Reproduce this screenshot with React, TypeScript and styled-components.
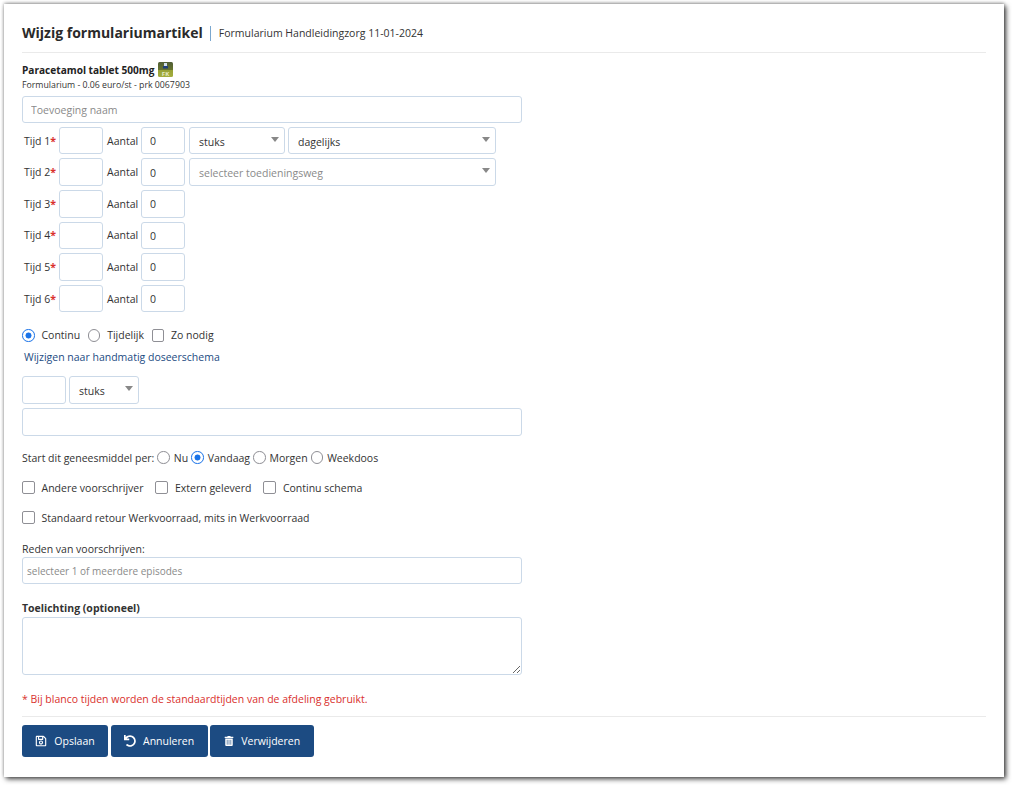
import React from "react";
import styled, { createGlobalStyle } from "styled-components";
import { FaRegSave, FaUndo, FaTrashAlt } from "react-icons/fa";

const Global = createGlobalStyle`
  html, body { margin: 0; padding: 0; background: #fff; }
  body { font-family: "Open Sans", "Liberation Sans", sans-serif; font-size: 10.5px; color: #333; }
`;

const Page = styled.div`
  box-sizing: border-box;
  width: 1012px;
  height: 785px;
  padding: 4px 8px 8px 4px;
  overflow: hidden;
`;
const Card = styled.div`
  box-sizing: border-box;
  width: 1000px;
  height: 773px;
  padding: 18px 18px 0;
  background: #fff;
  box-shadow: 0 -1px 3px rgba(0,0,0,.3), 2px 2px 5px rgba(0,0,0,.75);
`;
const Header = styled.div`
  display: flex;
  align-items: center;
  height: 22px;
  padding-bottom: 8px;
  border-bottom: 1px solid #eaeaea;
`;
const Title = styled.h1`
  margin: 0 7px 0 0;
  font-size: 14px;
  line-height: 22px;
  font-weight: 700;
  color: #2a2a2a;
`;
const Sub = styled.span`
  border-left: 1.5px solid #7aa7cf;
  padding-left: 8px;
  line-height: 15px;
  font-size: 10.5px;
  color: #333;
`;
const Med = styled.div`
  display: flex;
  align-items: center;
  gap: 4px;
  margin-top: 9px;
  height: 15px;
  font-size: 10.1px;
  font-weight: 700;
  color: #222;
`;
const Meta = styled.div`
  font-size: 8.75px;
  line-height: 12px;
  margin-top: 2px;
  margin-bottom: 4.6px;
  color: #333;
`;
const Field = styled.input<{ $w?: number }>`
  box-sizing: border-box;
  display: block;
  width: ${p => p.$w ?? 500}px;
  height: 27.6px;
  flex: none;
  padding: 1px 8px 0;
  border: 1px solid #cbd9e8;
  border-radius: 3px;
  background: #fff;
  font: 10.5px "Open Sans", sans-serif;
  color: #333;
  outline: none;
  &::placeholder { color: #8a8a8a; opacity: 1; }
`;
const Episode = styled(Field)`
  padding: 1px 4px 0;
  font-size: 10px;
`;
const Select = styled.div<{ $w: number; $muted?: boolean }>`
  box-sizing: border-box;
  position: relative;
  flex: none;
  display: flex;
  align-items: center;
  width: ${p => p.$w}px;
  height: 27.6px;
  padding: 2px 9px 0;
  border: 1px solid #cbd9e8;
  border-radius: 3px;
  font-size: 10.5px;
  color: ${p => (p.$muted ? "#8a8a8a" : "#333")};
  &::after {
    content: "";
    position: absolute;
    right: 5px;
    top: 9px;
    border-left: 4px solid transparent;
    border-right: 4px solid transparent;
    border-top: 5px solid #888;
  }
`;
const Rows = styled.div`
  display: grid;
  grid-auto-rows: 27.6px;
  row-gap: 4px;
  margin-top: 3.6px;
`;
const Row = styled.div`
  display: flex;
  align-items: center;
`;
const TimeLabel = styled.label`
  width: 37px;
  padding-left: 2px;
  box-sizing: border-box;
  white-space: nowrap;
  & > b { color: #d9302c; font-weight: 700; }
`;
const CountLabel = styled.label`
  width: 38px;
  padding-left: 4px;
  box-sizing: border-box;
`;
const Selects = styled.div`
  display: flex;
  gap: 3px;
  margin-left: 4px;
`;
const Options = styled.div<{ $gap?: number; $top: number }>`
  display: flex;
  align-items: center;
  height: 16px;
  gap: ${p => p.$gap ?? 7.5}px;
  margin-top: ${p => p.$top}px;
`;
const Option = styled.label<{ $inner?: number }>`
  display: flex;
  align-items: center;
  gap: ${p => p.$inner ?? 7}px;
  white-space: nowrap;
`;
const Radio = styled.span<{ $on?: boolean }>`
  box-sizing: border-box;
  width: 12.5px;
  height: 12.5px;
  flex: none;
  border-radius: 50%;
  border: ${p => (p.$on ? "1.5px solid #1a73e8" : "1.5px solid #8f8f95")};
  background: ${p => (p.$on ? "radial-gradient(circle, #1a73e8 0 2.7px, #fff 3.3px)" : "#fff")};
`;
const Check = styled.span`
  box-sizing: border-box;
  width: 12.5px;
  height: 12.5px;
  flex: none;
  border-radius: 2px;
  border: 1.5px solid #8f8f95;
  background: #fff;
`;
const LinkText = styled.a`
  display: block;
  margin: 6px 0 0 2px;
  line-height: 16px;
  font-size: 10.5px;
  color: #1c4b82;
`;
const Unit = styled(Row)`
  gap: 3px;
  margin-top: 11px;
`;
const Stack = styled.div`
  margin-top: 4px;
`;
const FieldLabel = styled.div<{ $bold?: boolean; $top: number }>`
  margin-top: ${p => p.$top}px;
  margin-bottom: ${p => (p.$bold ? 1 : 0)}px;
  line-height: 15px;
  font-weight: ${p => (p.$bold ? 700 : 400)};
  color: #333;
`;
const Area = styled.textarea`
  box-sizing: border-box;
  display: block;
  width: 500px;
  height: 58px;
  margin: 0;
  border: 1px solid #cbd9e8;
  border-radius: 3px;
  background: #fff;
  outline: none;
`;
const Note = styled.div`
  margin-top: 17px;
  line-height: 15px;
  color: #d9302c;
`;
const Footer = styled.div`
  display: flex;
  gap: 2.6px;
  margin-top: 9px;
  padding-top: 8px;
  border-top: 1px solid #eaeaea;
`;
const Btn = styled.button<{ $w: number }>`
  display: flex;
  align-items: center;
  justify-content: center;
  gap: 7px;
  box-sizing: border-box;
  width: ${p => p.$w}px;
  height: 32px;
  padding: 0;
  border: 0;
  border-radius: 3px;
  background: #1c4b82;
  color: #fff;
  font: 10.5px "Open Sans", sans-serif;
`;

const Badge = () => (
  <svg width="15" height="15" viewBox="0 0 15 15" aria-hidden="true">
    <defs>
      <linearGradient id="badgeFill" x1="0" y1="0" x2="0" y2="1">
        <stop offset="0" stopColor="#4f5d36" />
        <stop offset="0.5" stopColor="#66732f" />
        <stop offset="0.55" stopColor="#97a235" />
        <stop offset="1" stopColor="#a5ae3f" />
      </linearGradient>
    </defs>
    <rect width="15" height="15" rx="1.5" fill="url(#badgeFill)" />
    <rect x="6" y="1" width="3" height="3" fill="#cfdcec" />
    <rect x="5" y="4" width="5" height="2.5" fill="#1f3f7a" />
    <text x="7.5" y="13.6" textAnchor="middle" fontSize="6" fontWeight="700" fill="#e7ebc4" fontFamily="Open Sans, sans-serif">FK</text>
  </svg>
);

const times = [1, 2, 3, 4, 5, 6];

export default function App() {
  return (
    <Page>
      <Global />
      <Card>
        <Header>
          <Title>Wijzig formulariumartikel</Title>
          <Sub>Formularium Handleidingzorg 11-01-2024</Sub>
        </Header>
        <Med>Paracetamol tablet 500mg <Badge /></Med>
        <Meta>Formularium - 0.06 euro/st - prk 0067903</Meta>
        <Field placeholder="Toevoeging naam" />
        <Rows>
          {times.map(n => (
            <Row key={n}>
              <TimeLabel>Tijd {n}<b>*</b></TimeLabel>
              <Field $w={44} />
              <CountLabel>Aantal</CountLabel>
              <Field $w={44} defaultValue="0" />
              {n === 1 && (
                <Selects>
                  <Select $w={96}>stuks</Select>
                  <Select $w={208}>dagelijks</Select>
                </Selects>
              )}
              {n === 2 && (
                <Selects>
                  <Select $w={307} $muted>selecteer toedieningsweg</Select>
                </Selects>
              )}
            </Row>
          ))}
        </Rows>
        <Options $top={15}>
          <Option><Radio $on />Continu</Option>
          <Option><Radio />Tijdelijk</Option>
          <Option><Check />Zo nodig</Option>
        </Options>
        <LinkText>Wijzigen naar handmatig doseerschema</LinkText>
        <Unit>
          <Field $w={44} />
          <Select $w={70}>stuks</Select>
        </Unit>
        <Stack><Field /></Stack>
        <Options $top={14} $gap={3}>
          <span>Start dit geneesmiddel per:</span>
          <Option $inner={4}><Radio />Nu</Option>
          <Option $inner={4}><Radio $on />Vandaag</Option>
          <Option $inner={4}><Radio />Morgen</Option>
          <Option $inner={4}><Radio />Weekdoos</Option>
        </Options>
        <Options $top={14} $gap={12}>
          <Option><Check />Andere voorschrijver</Option>
          <Option><Check />Extern geleverd</Option>
          <Option><Check />Continu schema</Option>
        </Options>
        <Options $top={14}>
          <Option><Check />Standaard retour Werkvoorraad, mits in Werkvoorraad</Option>
        </Options>
        <FieldLabel $top={16}>Reden van voorschrijven:</FieldLabel>
        <Episode placeholder="selecteer 1 of meerdere episodes" />
        <FieldLabel $bold $top={17}>Toelichting (optioneel)</FieldLabel>
        <Area />
        <Note>* Bij blanco tijden worden de standaardtijden van de afdeling gebruikt.</Note>
        <Footer>
          <Btn $w={86}><FaRegSave size={12} />Opslaan</Btn>
          <Btn $w={97}><FaUndo size={12} />Annuleren</Btn>
          <Btn $w={104}><FaTrashAlt size={10} />Verwijderen</Btn>
        </Footer>
      </Card>
    </Page>
  );
}
